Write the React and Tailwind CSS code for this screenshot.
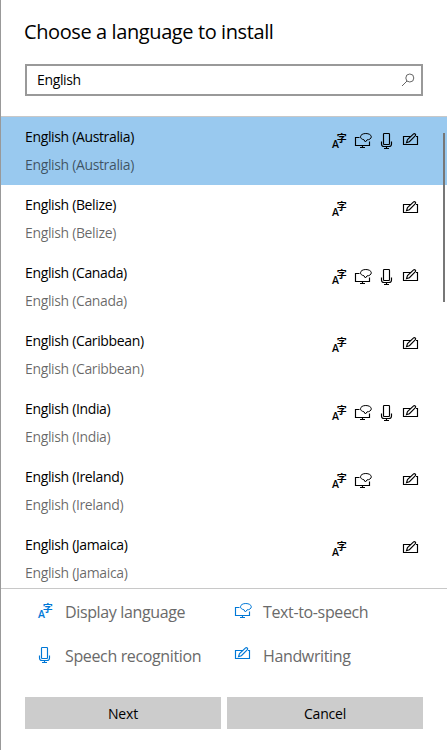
import React from 'react';

const languages = [
  { name: 'English (Australia)', features: ['display', 'tts', 'speech', 'pen'], selected: true },
  { name: 'English (Belize)', features: ['display', 'pen'] },
  { name: 'English (Canada)', features: ['display', 'tts', 'speech', 'pen'] },
  { name: 'English (Caribbean)', features: ['display', 'pen'] },
  { name: 'English (India)', features: ['display', 'tts', 'speech', 'pen'] },
  { name: 'English (Ireland)', features: ['display', 'tts', 'pen'] },
  { name: 'English (Jamaica)', features: ['display', 'pen'] },
];

const columns = ['display', 'tts', 'speech', 'pen'];

function Icon({ children }) {
  return (
    <svg width="17" height="17" viewBox="0 0 17 17" fill="none" stroke="currentColor" strokeWidth="1.15" className="block shrink-0 overflow-visible">
      {children}
    </svg>
  );
}

function FeatureIcon({ type }) {
  if (type === 'display') {
    return (
      <Icon>
        <g fill="currentColor" stroke="none">
          <text x="1" y="15" fontSize="10.5" fontWeight="600" className="font-['Open_Sans',sans-serif]">A</text>
          <text x="5.8" y="9.4" fontSize="10" fontWeight="700" className="font-['Noto_Sans_CJK_SC',sans-serif]">字</text>
        </g>
      </Icon>
    );
  }
  if (type === 'tts') {
    return (
      <Icon>
        <path d="M4.5 4.5h-4v8h14V8.5M7.5 12.5v2M5 14.5h5" />
        <path d="M9 6.8C6.8 6.3 5.5 5.4 5.5 3.8 5.5 1.9 7.8.5 10.8.5s5.5 1.4 5.5 3.3-2 3-4.3 3.1L10.4 9 9 6.8z" strokeWidth="1" />
      </Icon>
    );
  }
  if (type === 'speech') {
    return (
      <Icon>
        <rect x="4.5" y=".5" width="6" height="11" rx=".7" />
        <path d="M2.5 8.5V11c0 1.8 1 2.5 2.5 2.5h5c1.5 0 2.5-.7 2.5-2.5V8.5M7.5 13.5v2M5 15.5h5" />
      </Icon>
    );
  }
  return (
    <Icon>
      <path d="M8 3.5H.5v8h14v-8H13" />
      <path d="M3.5 9.6l1-3L10.6.9c1-.9 2.7.6 1.8 1.7L6.4 8.7z" />
    </Icon>
  );
}

function LanguageRow({ name, features, selected }) {
  return (
    <div className={`flex h-[68px] shrink-0 justify-between pl-6 pr-5 ${selected ? 'bg-[#99c9ef]' : ''}`}>
      <div className="pt-[6px] text-[14px] leading-7 tracking-[-0.35px]">
        <div>{name}</div>
        <div className="text-black/60">{name}</div>
      </div>
      <div className="grid w-24 grid-cols-4 pt-4">
        {columns.map((c) => (
          <div key={c}>{features.includes(c) && <FeatureIcon type={c} />}</div>
        ))}
      </div>
    </div>
  );
}

function LegendItem({ type, label }) {
  return (
    <div className="flex items-start">
      <span className="text-[#0078d7]"><FeatureIcon type={type} /></span>
      <span className="-mt-px ml-[11px] text-[16px] leading-5 tracking-[-0.36px] text-[#6a6a6a]">{label}</span>
    </div>
  );
}

export default function App() {
  return (
    <div className="flex h-[750px] w-[447px] flex-col overflow-hidden border-l border-[#999] bg-white font-['Open_Sans','Noto_Sans',sans-serif] text-black">
      <h1 className="h-16 pl-[23px] pt-[18px] text-[20px] leading-7 tracking-[-0.4px]">Choose a language to install</h1>
      <div className="ml-6 flex h-8 w-[398px] shrink-0 items-center justify-between border-2 border-[#999] pl-[10px] pr-[6px] text-[14px] tracking-[-0.35px]">
        <span className="-mt-px">English</span>
        <svg width="14" height="14" viewBox="0 0 14 14" fill="none" stroke="#666" className="block">
          <circle cx="8.8" cy="5" r="4" />
          <path d="M6 8L1 13" />
        </svg>
      </div>

      <div className="relative mt-5 flex h-[473px] shrink-0 flex-col overflow-hidden border-y border-[#c8c8c8]">
        {languages.map((l) => (
          <LanguageRow key={l.name} {...l} />
        ))}
        <div className="absolute right-[2px] top-4 h-[169px] w-[2px] bg-[#777]" />
      </div>

      <div className="grid h-[108px] shrink-0 grid-cols-[198px_1fr] grid-rows-[44px_44px] pl-9 pt-[14px]">
        <LegendItem type="display" label="Display language" />
        <LegendItem type="tts" label="Text-to-speech" />
        <LegendItem type="speech" label="Speech recognition" />
        <LegendItem type="pen" label="Handwriting" />
      </div>

      <div className="ml-6 grid w-[398px] grid-cols-2 gap-[6px] text-[14px] tracking-[-0.2px]">
        <button className="h-8 bg-[#ccc]">Next</button>
        <button className="h-8 bg-[#ccc]">Cancel</button>
      </div>
    </div>
  );
}
